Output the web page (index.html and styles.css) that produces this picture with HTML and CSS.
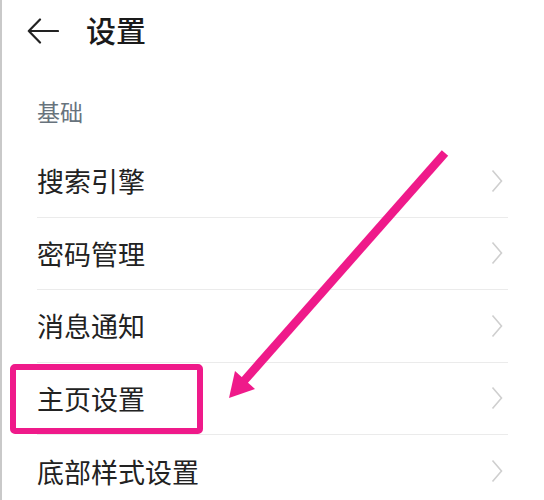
FILE: index.html
```html
<!DOCTYPE html>
<html lang="zh-CN">
<head>
<meta charset="utf-8">
<title>设置</title>
<link rel="stylesheet" href="styles.css">
</head>
<body>
<div class="page">
  <header class="topbar">
    <svg class="back" width="32" height="26" viewBox="0 0 32 26" aria-hidden="true">
      <path d="M13 1.5 L1.8 13 L13 24.5 M1.8 13 H31" fill="none" stroke="#222" stroke-width="2.2" stroke-linecap="round" stroke-linejoin="round"/>
    </svg>
    <h1 class="title">设置</h1>
  </header>
  <div class="section-label">基础</div>
  <ul class="list">
    <li class="row"><span class="label">搜索引擎</span><svg class="chev" width="12" height="24" viewBox="0 0 12 24"><path d="M1.5 1.5 L10.5 12 L1.5 22.5" fill="none" stroke="#cfcfcf" stroke-width="1.6"/></svg></li>
    <li class="row"><span class="label">密码管理</span><svg class="chev" width="12" height="24" viewBox="0 0 12 24"><path d="M1.5 1.5 L10.5 12 L1.5 22.5" fill="none" stroke="#cfcfcf" stroke-width="1.6"/></svg></li>
    <li class="row"><span class="label">消息通知</span><svg class="chev" width="12" height="24" viewBox="0 0 12 24"><path d="M1.5 1.5 L10.5 12 L1.5 22.5" fill="none" stroke="#cfcfcf" stroke-width="1.6"/></svg></li>
    <li class="row"><span class="label">主页设置</span><svg class="chev" width="12" height="24" viewBox="0 0 12 24"><path d="M1.5 1.5 L10.5 12 L1.5 22.5" fill="none" stroke="#cfcfcf" stroke-width="1.6"/></svg></li>
    <li class="row last"><span class="label">底部样式设置</span><svg class="chev" width="12" height="24" viewBox="0 0 12 24"><path d="M1.5 1.5 L10.5 12 L1.5 22.5" fill="none" stroke="#cfcfcf" stroke-width="1.6"/></svg></li>
  </ul>
  <div class="highlight"></div>
  <svg class="pointer" width="544" height="500" viewBox="0 0 544 500" aria-hidden="true">
    <line x1="445" y1="153" x2="243" y2="382" stroke="#ef1a8a" stroke-width="8.5"/>
    <polygon points="229,398 235,371 255,389" fill="#ef1a8a"/>
  </svg>
</div>
</body>
</html>
```

FILE: styles.css
```css
* { box-sizing: border-box; }
html, body {
  margin: 0;
  padding: 0;
  background: #fff;
}
body {
  font-family: "Noto Sans CJK SC", "Noto Sans", sans-serif;
  color: #222;
}
.page {
  position: relative;
  width: 544px;
  height: 500px;
  overflow: hidden;
  border-left: 2px solid #c9c9c9;
}
.topbar {
  height: 62px;
  display: flex;
  align-items: center;
  padding-left: 25px;
  gap: 27px;
}
.back { display: block; }
.title {
  margin: 0;
  padding-bottom: 4px;
  font-size: 30px;
  font-weight: 500;
  line-height: 1;
  color: #1a1a1a;
}
.section-label {
  padding: 34px 0 19px 35px;
  height: 83px;
  font-size: 23px;
  line-height: 30px;
  color: #68737d;
}
.list {
  list-style: none;
  margin: 0;
  padding: 0 36px 0 35px;
}
.row {
  height: 72.5px;
  display: flex;
  align-items: center;
  justify-content: space-between;
  padding-right: 5px;
  border-bottom: 1px solid #ebebeb;
}
.row.last { border-bottom: none; }
.label {
  font-size: 27px;
  line-height: 1;
  color: #222;
}
.chev { display: block; }
.highlight {
  position: absolute;
  left: 8px;
  top: 364px;
  width: 193px;
  height: 70px;
  border: 6.5px solid #ef1a8a;
  border-radius: 5px;
}
.pointer {
  position: absolute;
  left: -2px;
  top: 0;
}
```
